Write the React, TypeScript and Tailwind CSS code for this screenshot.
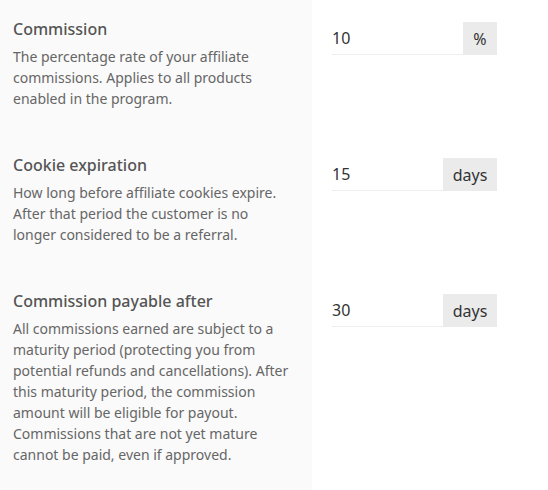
const rows = [
  {
    title: "Commission",
    lines: [
      "The percentage rate of your affiliate",
      "commissions. Applies to all products",
      "enabled in the program.",
    ],
    value: "10",
    suffix: "%",
    suffixClass: "w-[34px]",
  },
  {
    title: "Cookie expiration",
    lines: [
      "How long before affiliate cookies expire.",
      "After that period the customer is no",
      "longer considered to be a referral.",
    ],
    value: "15",
    suffix: "days",
    suffixClass: "w-[54px]",
  },
  {
    title: "Commission payable after",
    lines: [
      "All commissions earned are subject to a",
      "maturity period (protecting you from",
      "potential refunds and cancellations). After",
      "this maturity period, the commission",
      "amount will be eligible for payout.",
      "Commissions that are not yet mature",
      "cannot be paid, even if approved.",
    ],
    value: "30",
    suffix: "days",
    suffixClass: "w-[54px]",
  },
];

export default function App() {
  return (
    <div
      className="flex h-[490px] w-[548px] bg-white"
      style={{ fontFamily: '"Noto Sans", "Open Sans", sans-serif' }}
    >
      <div className="flex w-full flex-col">
        {rows.map((row, i) => (
          <div key={row.title} className={`flex ${i === rows.length - 1 ? "flex-1" : "h-[136px]"}`}>
            <div className="w-[312px] shrink-0 bg-[#fafafa] pl-[13px] pt-[18px]">
              <h3 className="text-[16px] font-medium leading-[22px] text-[#555]">{row.title}</h3>
              <p className="mt-[6px] text-[14px] leading-[21px] text-[#666]">
                {row.lines.map((l) => (
                  <span key={l} className="block whitespace-nowrap">
                    {l}
                  </span>
                ))}
              </p>
            </div>
            <div className="flex pl-[20px] pt-[22px]">
              <div className="flex h-[33px] w-[165px]">
                <input
                  type="text"
                  defaultValue={row.value}
                  className="min-w-0 flex-1 border-b border-[#eee] bg-transparent text-[16px] text-[#333] outline-none"
                />
                <span
                  className={`flex items-center justify-center bg-[#ebebeb] text-[16px] text-[#333] ${row.suffixClass}`}
                >
                  {row.suffix}
                </span>
              </div>
            </div>
          </div>
        ))}
      </div>
    </div>
  );
}
